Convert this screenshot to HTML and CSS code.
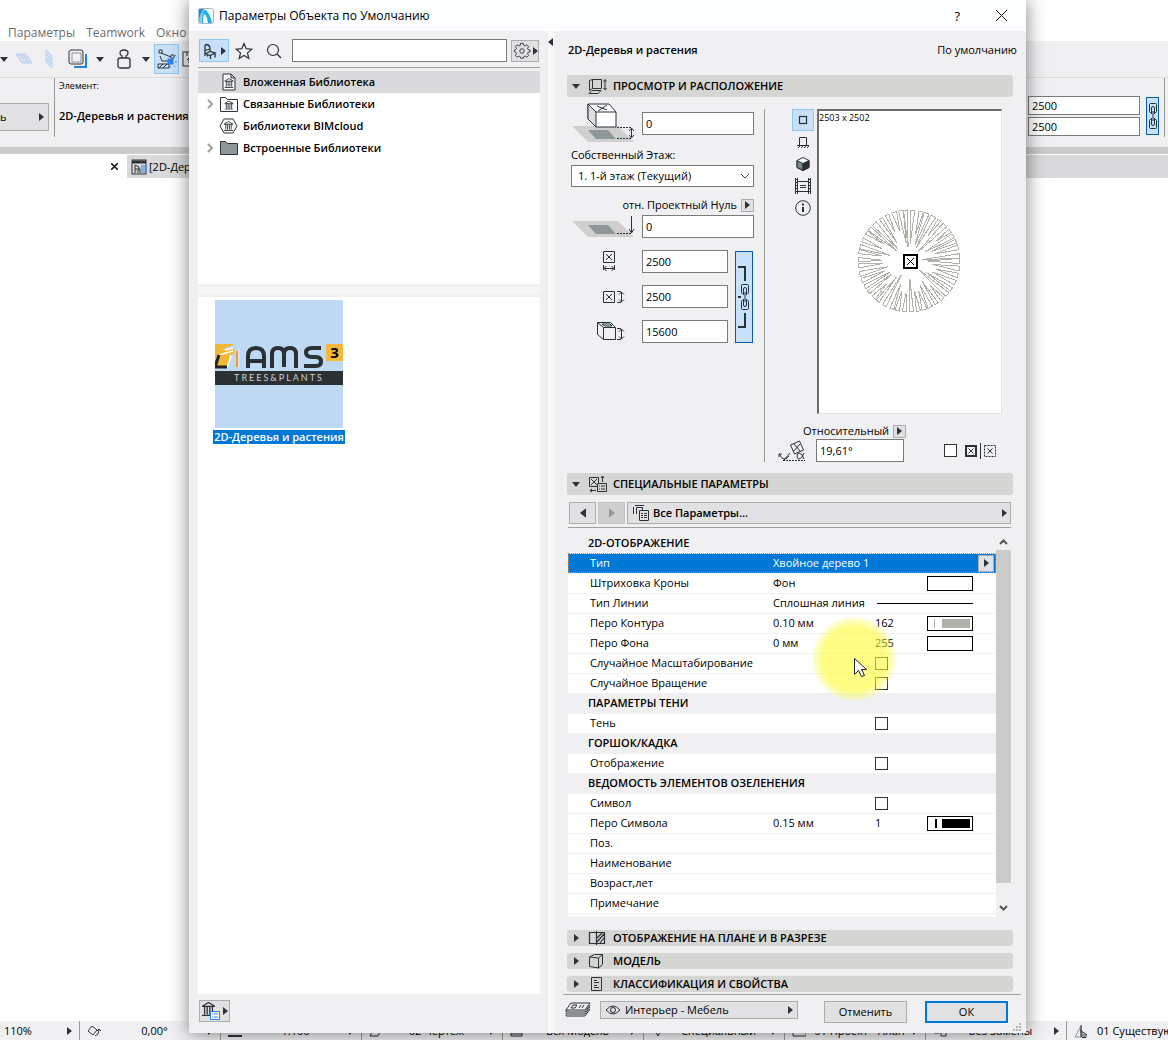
FILE: index.html
```html
<!DOCTYPE html>
<html lang="ru">
<head>
<meta charset="utf-8">
<title>Параметры Объекта по Умолчанию</title>
<link rel="stylesheet" href="styles.css">
</head>
<body>
<svg class="defs" aria-hidden="true">
  <symbol id="right" viewBox="0 0 5 8"><path d="M0 0 5 4 0 8z" fill="#2b3338"/></symbol>
  <symbol id="left" viewBox="0 0 5 8"><path d="M5 0 0 4 5 8z" fill="#2b3338"/></symbol>
  <symbol id="down" viewBox="0 0 8 5"><path d="M0 0h8L4 5z" fill="#2b3338"/></symbol>
  <symbol id="chev" viewBox="0 0 6 10"><path d="M1 1l4 4-4 4" fill="none" stroke="#a0a0a0" stroke-width="2"/></symbol>
  <symbol id="temple" viewBox="0 0 10 10"><path d="M0 3 5 0l5 3zM0 10h10M2 3v6M4 3v6M6 3v6M8 3v6" fill="none" stroke="#2b3338"/></symbol>
  <symbol id="chain" viewBox="0 0 10 28"><path d="M3.500 10.500h-1q-1 0-1-1v-7q0-1 1-1h5q1 0 1 1v7q0 1-1 1h-1M3.500 17.500h-1q-1 0-1 1v7q0 1 1 1h5q1 0 1-1v-7q0-1-1-1h-1M3.500 12V6q0-1.500 1.500-1.500T6.500 6v6M3.500 16v6q0 1.500 1.500 1.500T6.500 22v-6M5 9v10" fill="none" stroke="#263238"/></symbol>
  <symbol id="chair" viewBox="0 0 14 16"><path d="M2 13V3q0-1.500 1.500-1.500Q7 2 7 6v3M2 7.500l5-1.500M2 11l5-2.500 5 1.500-5 2.500L3 11M7.500 12.500V16M12 10v4.500M4.500 12v1.500" fill="none" stroke="#2b3338" stroke-width="1.300"/></symbol>
</svg>
<div class="app">
  <nav class="menubar">
    <a href="#">Параметры</a>
    <a href="#">Teamwork</a>
    <a href="#">Окно</a>
  </nav>
  <div class="toolbar">
    <svg width="8" height="5"><use href="#down"/></svg>
    <svg class="t-grid" width="18" height="12" fill="none" stroke="#b4cdf0"><path d="M1 1h10l6 9H7zM4 5h10M5 1l6 9M8 1l6 9M2 3h10M6 8h10"/></svg>
    <svg class="t-wall" width="8" height="20" fill="none" stroke="#b4cdf0"><path d="M1 1l6 6v12l-6-6zM3 3v12M5 5v12M1 5l6 6M1 9l6 6"/></svg>
    <svg class="t-box" width="20" height="20" fill="none"><path d="M6 18h12V5" stroke="#287ee8" stroke-width="2"/><rect x="1" y="1" width="14" height="14" rx="2" fill="#f0f0f3" stroke="#2b3338"/><rect x="4" y="4" width="9" height="9" stroke="#8c9296"/></svg>
    <svg class="t-drop" width="8" height="5"><use href="#down"/></svg>
    <svg class="t-lock" width="14" height="20" fill="none" stroke="#2b3338" stroke-width="1.300"><path d="M5 9V7Q3 6 3 4q0-3 4-3t4 3q0 2-2 3v2"/><rect x="1" y="9" width="12" height="10" rx="2"/></svg>
    <svg class="t-drop2" width="8" height="5"><use href="#down"/></svg>
    <button class="tool-active" type="button" aria-label="Привязка"><svg width="20" height="20" fill="none" stroke="#2b3338"><path d="M4 4l10 4M3 7l2 5h7M1 15h11v4H1zM2 19l4-4M6 19l4-4"/><path d="M2 1h3v3H2zM14 6h3v3h-3z" fill="#fff"/><rect x="11" y="10" width="5" height="5" fill="#2b83f6" stroke="#2b83f6"/><path d="M17 8l2-2M18 13h2M17 17l1 1M13 17v2" stroke="#2b83f6"/></svg></button>
    <svg width="14" height="16" fill="none" stroke="#2b3338"><rect x="1" y="1" width="14" height="14"/><path d="M5 1v4M9 1v3M7 12V7M5 9l2-2 2 2"/></svg>
  </div>
  <div class="infobar">
    <button class="info-pick" type="button"><span>ь</span><svg width="5" height="8"><use href="#right"/></svg></button>
    <div class="info-name"><span class="small">Элемент:</span><b>2D-Деревья и растения</b></div>
    <div class="info-size">
      <input aria-label="Ширина" value="2500"><input aria-label="Глубина" value="2500">
    </div>
    <button class="link-btn info-link" type="button" aria-label="Сохранять пропорции"><svg width="10" height="28"><use href="#chain"/></svg></button>
    <span class="info-end"></span>
  </div>
  <div class="tabs">
    <button class="tab-close" type="button" aria-label="Закрыть"><svg width="7" height="7" stroke="#222" stroke-width="1.600"><path d="M0 0l7 7M7 0 0 7"/></svg></button>
    <div class="tab"><svg width="16" height="16" fill="none" stroke="#2b3338"><rect x="1" y="1" width="14" height="14"/><path d="M1 3h14" stroke-width="3"/><path d="M4 14V6l4 2v3M4 10h5v4M7 11v3"/><path d="M10 7h4M10 9h4M10 11h4M10 13h4" stroke="#2b83f6"/></svg><span>[2D-Деревья]</span></div>
  </div>
  <main class="canvas"></main>
  <footer class="status">
    <div class="st st-first"><span>110%</span><svg width="5" height="8"><use href="#right"/></svg></div>
    <div class="st"><svg width="14" height="12" fill="none" stroke="#2b3338"><path d="M5 1l5 4-4 5-5-4zM8 11q4-1 4-6M10 6l2-2 2 2"/></svg><span>0,00°</span><svg width="5" height="8"><use href="#right"/></svg></div>
    <div class="st"><svg width="14" height="12" stroke="#2b3338"><path d="M0 11h14" stroke-width="2"/></svg><span>1:100</span><svg width="5" height="8"><use href="#right"/></svg></div>
    <div class="st"><svg width="14" height="12" fill="none" stroke="#2b3338"><path d="M5 3h8l-4 8H1z"/></svg><span>02 Чертёж</span><svg width="5" height="8"><use href="#right"/></svg></div>
    <div class="st"><svg width="14" height="12" fill="none" stroke="#2b3338"><path d="M1 3h11v8H1zM1 9h11"/></svg><span>Вся Модель</span><svg width="5" height="8"><use href="#right"/></svg></div>
    <div class="st"><svg width="14" height="12" fill="none" stroke="#2b3338"><path d="M3 3l4 8 4-8"/></svg><span>Специальный</span><svg width="5" height="8"><use href="#right"/></svg></div>
    <div class="st"><svg width="14" height="12" fill="none" stroke="#2b3338"><path d="M1 3v8h13V3"/></svg><span>01 Проект - План</span><svg width="5" height="8"><use href="#right"/></svg></div>
    <div class="st"><svg width="14" height="12" fill="none" stroke="#2b3338"><path d="M1 8h5M8 5h5v6H8z"/></svg><span>Без Замены</span><svg width="5" height="8"><use href="#right"/></svg></div>
    <div class="st st-last"><svg width="14" height="14" fill="none" stroke="#2b3338"><path d="M1 13 7 2v11z" stroke="#8c9296"/><path d="M6 6l7 5M8 8v5.500h4V10M10 13v-3M7 1v12"/></svg><span>01 Существую</span></div>
  </footer>
</div>

<section class="dialog" role="dialog" aria-labelledby="dlg-title">
  <header class="titlebar">
    <svg width="16" height="16"><rect x=".5" y=".5" width="15" height="15" rx="2" fill="#f4f8fa" stroke="#a9b7bf"/><path d="M1 1h5Q2 5 1 13z" fill="#1d8fd0"/><path d="M1 15Q2 3 6.500 1.500 11 3 14 15h-4Q9 8 6.500 6 5 8 5 15z" fill="#19b0ee"/><path d="M1 15Q2 4 6.500 1.500 4 6 4 15z" fill="#7fcdf0"/></svg>
    <h1 id="dlg-title">Параметры Объекта по Умолчанию</h1>
    <button type="button" class="plain help" aria-label="Справка">?</button>
    <button type="button" class="plain close" aria-label="Закрыть"><svg width="11" height="11" stroke="#111"><path d="M0 0l11 11M11 0 0 11"/></svg></button>
  </header>
  <div class="body">
    <aside class="library">
      <div class="lib-tools">
        <button type="button" class="chair-btn" aria-label="Объекты"><svg width="14" height="16"><use href="#chair"/></svg><svg width="5" height="8"><use href="#right"/></svg></button>
        <button type="button" class="plain" aria-label="Избранное"><svg width="18" height="18" fill="none" stroke="#2b3338" stroke-width="1.200"><path d="M9 1.500l2.200 5.200 5.600.5-4.300 3.700 1.300 5.600L9 13.500l-4.800 3 1.300-5.600L1.200 7.200l5.600-.5z"/></svg></button>
        <svg class="search-icon" width="16" height="16" fill="none" stroke="#2b3338" stroke-width="1.200"><circle cx="7" cy="7" r="5.500"/><path d="M11 11l4 4"/></svg>
        <input class="search" aria-label="Поиск">
        <button type="button" class="grey-btn gear-btn" aria-label="Настройки"><svg width="18" height="18" viewBox="0 0 18 20" fill="none" stroke="#2b3338"><path d="M7.500 1.500h3l.4 2.200 1.600.7 1.900-1.300 2 2-1.300 1.900.7 1.500 2.200.5v2l-2.200.5-.7 1.500 1.300 1.900-2 2-1.900-1.300-1.600.7-.4 1.700h-3l-.4-1.700-1.600-.7-1.900 1.300-2-2L2.900 13l-.7-1.500L.5 11V9l1.700-.5L2.900 7 1.600 5.100l2-2 1.900 1.300 1.600-.7z"/><circle cx="9" cy="10" r="2.500"/></svg><svg width="5" height="8"><use href="#right"/></svg></button>
      </div>
      <ul class="tree">
        <li class="selected"><i></i><svg width="20" height="18" fill="#fff" stroke="#2b3338"><path d="M4 1h8l4 4v12H4zM12 1v4h4"/><use href="#temple" x="5.500" y="5" width="9" height="10"/></svg><span>Вложенная Библиотека</span></li>
        <li><svg class="exp" width="6" height="10"><use href="#chev"/></svg><svg width="20" height="18" fill="none" stroke="#2b3338"><path d="M1.500 16.500v-14h5l2 2h10v12z"/><use href="#temple" x="5.500" y="6" width="9" height="9"/></svg><span>Связанные Библиотеки</span></li>
        <li><i></i><svg width="20" height="18" fill="none" stroke="#2b3338"><path d="M5 2h9l4 7-4 7H5L1 9z"/><use href="#temple" x="5" y="4" width="9" height="10"/></svg><span>Библиотеки BIMcloud</span></li>
        <li><svg class="exp" width="6" height="10"><use href="#chev"/></svg><svg width="20" height="18" fill="#8f979a" stroke="#2b3338"><path d="M1.500 15.500v-13h5l2 2h10v11z"/></svg><span>Встроенные Библиотеки</span></li>
      </ul>
      <div class="hsplit"></div>
      <div class="gallery">
        <figure class="item">
          <div class="thumb">
            <div class="brand">
              <svg width="26" height="26"><path d="M0 0h20L6 6l14-1-1 5-5 1 1 6-5 7H0z" fill="#f4b731"/><path d="M10 6l8-2M4 11l14-4M16 12l-4 12" stroke="#fff" stroke-width="1.500"/><path d="M24 4v20" stroke="#e3edf5" stroke-width="1"/><path d="M22 7v16" stroke="#ff9a1e" stroke-width="2"/><path d="M4 11 1 20v3h11" fill="none" stroke="#1f2427" stroke-width="3"/></svg>
              <svg class="ams" width="80" height="26" fill="none" stroke="#2b3033" stroke-width="4"><path d="M4 24V12q0-8 8-8t8 8v12M4 17h16M28 24V10q0-6 6-6t6 6v13M40 10q0-6 6-6t6 6v14M77 4h-9q-6 0-6 4.500t6 4.500h4q5 0 5 4.500T72 22H60"/></svg>
              <span class="three">3</span>
            </div>
            <div class="brand-line">TREES&amp;PLANTS</div>
          </div>
          <figcaption>2D-Деревья и растения</figcaption>
        </figure>
      </div>
      <button type="button" class="grey-btn lib-btn" aria-label="Менеджер библиотек"><svg width="18" height="18"><use href="#temple" width="13" height="14"/><rect x="8.500" y="9.500" width="9" height="8" fill="#fff" stroke="#2b83f6"/><path d="M10 12h1M12 12h4M10 15h1M12 15h4" stroke="#2b83f6"/></svg><svg width="5" height="8"><use href="#right"/></svg></button>
    </aside>
    <div class="vsplit"><svg width="5" height="8"><use href="#left"/></svg></div>
    <div class="settings">
      <div class="sel-head"><b>2D-Деревья и растения</b><span>По умолчанию</span></div>

      <button type="button" class="section"><svg class="tri" width="8" height="5"><use href="#down"/></svg><svg width="20" height="18" fill="none" stroke="#2b3338"><path d="M4.500 2.500h9v9h-9zM4.500 2.500l-3 1v10l3-2M4 13.500h9l-3 3H1zM17 3v9M15.500 4.500 17 2.500l1.500 2M15.500 11l1.500 2 1.500-2"/></svg>ПРОСМОТР И РАСПОЛОЖЕНИЕ</button>
      <div class="placement">
        <div class="dims">
          <div class="row">
            <svg width="64" height="42" fill="none" stroke="#263238"><path d="M1 24h46l16 16H17z" fill="#cfcfd0" stroke="none"/><path d="M17 28h20l8 9H25z" fill="#8d979a" stroke="none"/><path d="M17 2h21l7 8v15H25l-8-8z" fill="#fff"/><path d="M17 2l8 8v15l-8-8z" fill="#dedede"/><path d="M17 2l8 8h20M26 4l10 4M36 3l-9 6"/><path d="M46 25.500h15M46 36.500h15" stroke-dasharray="2 1"/><path d="M60.500 27v8M58 29l2.500-3 2.500 3M58 33l2.500 3 2.500-3"/></svg>
            <input class="wide" aria-label="Возвышение над этажом" value="0">
          </div>
          <label for="story">Собственный Этаж:</label>
          <div class="select"><select id="story"><option>1. 1-й этаж (Текущий)</option></select><svg width="10" height="6" fill="none" stroke="#444"><path d="M1 1l4 4 4-4"/></svg></div>
          <div class="rel"><label for="zero">отн. Проектный Нуль</label><button type="button" class="mini" aria-label="Выбрать уровень"><svg width="5" height="8"><use href="#right"/></svg></button></div>
          <div class="row">
            <svg width="64" height="24" fill="none" stroke="#263238"><path d="M1 6h46l16 16H17z" fill="#cfcfd0" stroke="none"/><path d="M17 10h20l8 9H25z" fill="#8d979a" stroke="none"/><path d="M46 18.500h15" stroke-dasharray="2 1"/><path d="M60.500 1v17M58 14l2.500 4 2.500-4" /></svg>
            <input class="wide" id="zero" value="0">
          </div>
          <div class="sizes">
            <div class="size-list">
              <div class="row"><svg width="64" height="24" fill="none" stroke="#263238"><path d="M32.500 1.500h11v11h-11zM35 4l6 6M41 4l-6 6M32.500 15v5M43.500 15v5M33 18.500h10M35.500 16 33 18.500l2.500 2.500M40.500 16l2.500 2.500-2.500 2.500"/></svg><input aria-label="Ширина" value="2500"></div>
              <div class="row"><svg width="64" height="24" fill="none" stroke="#263238"><path d="M32.500 6.500h11v11h-11zM35 9l6 6M41 9l-6 6M46 6.500h4M46 17.500h4M50.500 7v10M48 9.500 50.500 7 53 9.500M48 14.500l2.500 2.500 2.500-2.500"/></svg><input aria-label="Глубина" value="2500"></div>
              <div class="row"><svg width="64" height="24" fill="none" stroke="#263238"><path d="M26.500 2.500h13l5 5v12h-12l-6-5zM26.500 2.500l6 5v12M32.500 7.500h12M31 4h8l2 2h-7zM46 8.500h4M46 19.500h4M50.500 9v10M48 11.500 50.500 9l2.500 2.500M48 16.500l2.500 2.500 2.500-2.500"/></svg><input aria-label="Высота" value="15600"></div>
            </div>
            <button type="button" class="link-btn" aria-label="Сохранять пропорции"><svg width="14" height="66" fill="none" stroke="#263238"><path d="M1 3h7v14M8 49v14H1" stroke-width="2"/><path d="M1 33h3" stroke-width="2"/><use href="#chain" x="3" y="19" width="10" height="28"/></svg></button>
          </div>
        </div>
        <div class="view">
          <div class="view-row">
            <div class="view-modes">
              <button type="button" class="on" aria-label="План"><svg width="16" height="16" fill="none" stroke="#263238" stroke-width="1.200"><rect x="4.500" y="4.500" width="7" height="7"/></svg></button>
              <button type="button" aria-label="Фасад"><svg width="16" height="16" fill="none" stroke="#263238"><path d="M4.500 11V3.500h7V11M2 11.500h12M3 14l2-2M6 14l2-2M9 14l2-2M12 14l2-2"/></svg></button>
              <button type="button" aria-label="3D-вид"><svg width="16" height="16" stroke="#263238"><path d="M8 1.500l6 3v7l-6 3-6-3v-7z" fill="#fff"/><path d="M2 4.500l6 3v7l-6-3z" fill="#7d8486"/><path d="M8 7.500l6-3v7l-6 3z" fill="#263238"/></svg></button>
              <button type="button" aria-label="Эскиз"><svg width="16" height="16" fill="none" stroke="#263238"><path d="M.5 0v16M2.500 0v16M13.500 0v16M15.500 0v16"/><path d="M1.500 1v15M14.500 1v15" stroke-dasharray="1 2"/><path d="M3 3.500h10M3 13.500h10M5 7.500h6M5 9.500h6"/></svg></button>
              <button type="button" aria-label="Сведения"><svg width="16" height="16" fill="none" stroke="#263238"><circle cx="8" cy="8" r="7.300"/><path d="M8 7v5" stroke-width="2"/><path d="M8 3.500v2" stroke-width="2"/></svg></button>
            </div>
            <div class="preview">
              <span class="small">2503 x 2502</span>
              <svg class="plant" viewBox="-52 -52 104 104" width="104" height="104" fill="none" stroke="#b1b1a9"><g id="spokes" shape-rendering="crispEdges"></g><rect x="-5" y="-6" width="13" height="13" fill="#fff" stroke="#000" stroke-width="2"/><path d="M-2-3l7 7M5-3l-7 7" stroke="#000"/></svg>
            </div>
          </div>
          <div class="angle-label"><label for="angle">Относительный</label><button type="button" class="mini" aria-label="Тип угла"><svg width="5" height="8"><use href="#right"/></svg></button></div>
          <div class="angle-row">
            <svg width="28" height="22" fill="none" stroke="#263238"><path d="M12.500 5l9-4 4 9-9 4zM16 4l6 7M22 4l-6 7M12 13l-6 7M1 14l4 5q3 1 6-3M1 17v-3h3"/><path d="M5 20.500h22" stroke-dasharray="2 1"/><path d="M26 13q-2 6-5 6-2 0-2-3t2-3q3 0 5 6"/></svg>
            <input id="angle" value="19,61°">
            <input type="checkbox" class="mirror" aria-label="Зеркально">
            <svg class="anchors" width="32" height="16" fill="none" stroke="#263238"><rect x="2" y="3" width="10" height="10" stroke-width="2"/><path d="M4.500 5.500l5 5M9.500 5.500l-5 5M16.500 0v16M23.500 5.500l5 5M28.500 5.500l-5 5"/><rect x="20.500" y="2.500" width="11" height="11" stroke-dasharray="2 1"/></svg>
          </div>
        </div>
      </div>

      <button type="button" class="section"><svg class="tri" width="8" height="5"><use href="#down"/></svg><svg width="20" height="18" fill="none" stroke="#2b3338"><path d="M1.500 2.500h9v9h-9zM3 4l6 6M9 4l-6 6M14.500 1v6M13 3l1.500-2L16 3M2 15.500h6M4 14l-2 1.500L4 17"/><path d="M9.500 8.500h9v8h-9z" fill="#d5d5d3"/><path d="M11 11h1M13 11h4M11 14h1M13 14h4"/></svg>СПЕЦИАЛЬНЫЕ ПАРАМЕТРЫ</button>
      <div class="pager">
        <button type="button" class="grey-btn" aria-label="Назад"><svg width="6" height="10"><use href="#left"/></svg></button>
        <button type="button" class="grey-btn" disabled aria-label="Вперёд"><svg width="6" height="10"><use href="#right"/></svg></button>
        <button type="button" class="grey-btn all"><svg width="18" height="16" fill="none" stroke="#2b3338"><path d="M1.500 2v7M4.500 9V2.500h6V5M3 .5h9M7.500 5.500h9v10h-9zM9 8.500h2M12 8.500h3M9 10.500h2M12 10.500h3M9 12.500h2M12 12.500h3"/></svg><b>Все Параметры...</b><svg width="5" height="8"><use href="#right"/></svg></button>
      </div>
      <div class="params">
        <table>
          <colgroup><col class="c1"><col class="c2"><col class="c3"><col></colgroup>
          <tr class="group"><th colspan="4">2D-ОТОБРАЖЕНИЕ</th></tr>
          <tr class="current"><td>Тип</td><td colspan="2">Хвойное дерево 1</td><td><button type="button" class="mini" aria-label="Выбрать тип"><svg width="5" height="8"><use href="#right"/></svg></button></td></tr>
          <tr><td>Штриховка Кроны</td><td>Фон</td><td></td><td><span class="swatch"></span></td></tr>
          <tr><td>Тип Линии</td><td>Сплошная линия</td><td colspan="2"><span class="line"></span></td></tr>
          <tr><td>Перо Контура</td><td>0.10 мм</td><td>162</td><td><span class="swatch pen grey"></span></td></tr>
          <tr><td>Перо Фона</td><td>0 мм</td><td>255</td><td><span class="swatch"></span></td></tr>
          <tr><td colspan="2"><label for="p1">Случайное Масштабирование</label></td><td><input type="checkbox" id="p1"></td><td></td></tr>
          <tr><td colspan="2"><label for="p2">Случайное Вращение</label></td><td><input type="checkbox" id="p2"></td><td></td></tr>
          <tr class="group"><th colspan="4">ПАРАМЕТРЫ ТЕНИ</th></tr>
          <tr><td colspan="2"><label for="p3">Тень</label></td><td><input type="checkbox" id="p3"></td><td></td></tr>
          <tr class="group"><th colspan="4">ГОРШОК/КАДКА</th></tr>
          <tr><td colspan="2"><label for="p4">Отображение</label></td><td><input type="checkbox" id="p4"></td><td></td></tr>
          <tr class="group"><th colspan="4">ВЕДОМОСТЬ ЭЛЕМЕНТОВ ОЗЕЛЕНЕНИЯ</th></tr>
          <tr><td colspan="2"><label for="p5">Символ</label></td><td><input type="checkbox" id="p5"></td><td></td></tr>
          <tr><td>Перо Символа</td><td>0.15 мм</td><td>1</td><td><span class="swatch pen"></span></td></tr>
          <tr><td colspan="4">Поз.</td></tr>
          <tr><td colspan="4">Наименование</td></tr>
          <tr><td colspan="4">Возраст,лет</td></tr>
          <tr><td colspan="4">Примечание</td></tr>
        </table>
        <div class="scroll"><svg width="9" height="6" fill="none" stroke="#555" stroke-width="2"><path d="M1 5l3.500-3.500L8 5"/></svg><div class="thumb-bar"></div><svg width="9" height="6" fill="none" stroke="#555" stroke-width="2"><path d="M1 1l3.500 3.500L8 1"/></svg></div>
        <svg class="halo" width="84" height="84"><defs><radialGradient id="glow"><stop offset=".76" stop-color="#fdfb30" stop-opacity=".6"/><stop offset="1" stop-color="#fdfb30" stop-opacity=".12"/></radialGradient></defs><circle cx="42" cy="42" r="42" fill="url(#glow)"/><path d="M42.500 41.500v16l4-4 3 6 3-1-3-6h5z" fill="#fff" stroke="#222"/></svg>
      </div>
      <div class="closed">
        <button type="button" class="section thin"><svg class="tri" width="5" height="8"><use href="#right"/></svg><svg width="20" height="16" fill="none" stroke="#2b3338"><path d="M8 2.500H1.500v11H8M8.500 1v14M8.500 2.500h8v11h-8M9 8l5-5M9 12l7-8M12 13l4-5" stroke-width="1.200"/></svg>ОТОБРАЖЕНИЕ НА ПЛАНЕ И В РАЗРЕЗЕ</button>
        <button type="button" class="section thin"><svg class="tri" width="5" height="8"><use href="#right"/></svg><svg width="20" height="16" fill="none" stroke="#2b3338"><path d="M1.500 4l5-2.500h8l-4 3.500v10l-9-1.500zM1.500 4l9 1M14.500 1.500v10l-4 3.500"/></svg>МОДЕЛЬ</button>
        <button type="button" class="section thin"><svg class="tri" width="5" height="8"><use href="#right"/></svg><svg width="20" height="16" fill="none" stroke="#2b3338"><path d="M3.500 1.500h10v13h-10zM6 4.500h3M6 6.500h5M6 9.500h3M6 11.500h5"/></svg>КЛАССИФИКАЦИЯ И СВОЙСТВА</button>
      </div>
      <footer class="actions">
        <svg width="26" height="16" fill="none" stroke="#2b3338"><path d="M6 1h19l-5 7H1zM1 8v2h19l5-7M1 11v1h19l5-7M1 13v1h19l5-7M8 3h4l-2 3H6zM14 6l2-3M17 6l2-3"/></svg>
        <button type="button" class="grey-btn layer"><svg width="16" height="12" fill="none" stroke="#2b3338"><path d="M1 6q7-8 14 0-7 8-14 0z"/><circle cx="8" cy="6" r="2.500"/></svg><span>Интерьер - Мебель</span><svg width="5" height="8"><use href="#right"/></svg></button>
        <button type="button" class="push">Отменить</button>
        <button type="button" class="push ok">ОК</button>
        <svg class="grip" width="8" height="8" fill="#b4b4b4"><path d="M6 0h2v2H6zM3 3h2v2H3zM6 3h2v2H6zM0 6h2v2H0zM3 6h2v2H3zM6 6h2v2H6z"/></svg>
      </footer>
    </div>
  </div>
</section>
<script src="script.js"></script>
</body>
</html>
```
FILE: script.js
```js
// Draws the conifer crown: narrow open wedges around the insertion point.
const crown = document.getElementById('spokes');
const NS = 'http://www.w3.org/2000/svg';
const COUNT = 46;
let seed = 7;
const rnd = () => (seed = (seed * 16807) % 2147483647) / 2147483647;
const at = (deg, r) => {
  const a = deg * Math.PI / 180;
  return (r * Math.cos(a)).toFixed(1) + ' ' + (r * Math.sin(a)).toFixed(1);
};
for (let i = 0; i < COUNT; i++) {
  const deg = i * 360 / COUNT + rnd() * 3;
  const half = 2 + rnd();
  const tip = 12 + rnd() * 22;
  const p = document.createElementNS(NS, 'path');
  p.setAttribute('d', `M${at(deg, tip)}L${at(deg - half, 51)}L${at(deg + half, 51)}L${at(deg, tip)}`);
  crown.appendChild(p);
}
```
FILE: styles.css
```css
* { box-sizing: border-box; }
body {
  margin: 0;
  background: #fff;
  color: #000;
  font: 11px/16px "Open Sans", "Noto Sans", sans-serif;
}
button, input, select { font: inherit; color: inherit; margin: 0; padding: 0; border-radius: 0; }
button { display: flex; align-items: center; border: 0; background: none; }
input { min-width: 0; border: 1px solid #7a7a7a; background: #fff; padding: 0 3px; }
svg { display: block; flex: none; }
b { font-weight: 600; }
.defs { position: absolute; width: 0; height: 0; }
.small { font-size: 9px; }

/* main window */
.app { display: flex; flex-direction: column; min-height: 100vh; }
.menubar { display: flex; gap: 11px; height: 41px; padding: 25px 8px 0; font-size: 12px; }
.menubar a { color: #6d6d6d; text-decoration: none; }
.toolbar { display: flex; align-items: center; height: 37px; background: #f0f0f3; border-bottom: 1px solid #dcdcdc; }
.t-grid { margin-left: 7px; }
.t-wall { margin-left: 12px; }
.t-box { margin-left: 15px; }
.t-drop { margin-left: 8px; }
.t-lock { margin-left: 13px; }
.t-drop2 { margin: 0 4px 0 11px; }
.tool-active { width: 25px; height: 30px; margin-right: 3px; justify-content: center; background: #c9e1f8; border: 1px solid #90c8f0; }
.infobar { display: flex; height: 69px; padding-right: 3px; background: #f0f0f3; }
.info-pick { align-self: center; justify-content: space-between; width: 49px; height: 28px; padding-right: 4px; margin-top: 8px; background: #e1e1e3; border: 1px solid #adadad; border-left: 0; }
.info-name { display: flex; flex-direction: column; gap: 14px; margin: 0 auto 10px 5px; padding-left: 4px; border-left: 1px solid #999; }
.info-size { display: flex; flex-direction: column; gap: 2px; width: 112px; padding-top: 18px; }
.info-size input { height: 19px; }
.link-btn { justify-content: center; background: #c9e1f8; border: 1px solid #0a5ba5; }
.info-link { width: 13px; height: 38px; margin: 19px 5px 0 6px; }
.info-end { width: 1px; height: 59px; background: #999; }
.tabs { display: flex; height: 31px; border-top: 7px solid #cbcbc9; }
.tab-close { width: 127px; justify-content: flex-end; padding-right: 9px; }
.tab { display: flex; flex: 1; align-items: center; gap: 2px; margin-top: 1px; padding-left: 4px; background: #dadadc; }
.canvas { flex: 1; }
.status { display: flex; height: 19px; overflow: hidden; background: #f0f0f3; }
.st { display: flex; flex: none; align-items: center; justify-content: space-between; width: 141px; padding: 0 7px; border-left: 1px solid #999; white-space: nowrap; }
.st-first { width: 79px; padding: 0 7px 0 4px; border: 0; }
.st-last { flex: 1; justify-content: flex-start; gap: 9px; padding-right: 0; }

/* dialog window */
.dialog { position: absolute; inset: 0 142px 7px 189px; display: flex; flex-direction: column; background: #f0f0f3; box-shadow: 0 0 18px rgba(0, 0, 0, .5); }
.titlebar { display: flex; align-items: center; height: 31px; padding: 0 19px 0 9px; background: #fbfdfe; }
h1 { flex: 1; margin: 0 0 0 5px; font-size: 12px; font-weight: 400; }
.help { font-size: 13px; margin-right: 36px; }
.body { display: flex; flex: 1; min-height: 0; }
.library { display: flex; flex: 1 1 351px; flex-direction: column; min-width: 0; padding: 7px 0 11px 9px; }
.lib-tools { display: flex; align-items: center; height: 30px; padding: 0 1px 4px; border-bottom: 1px solid #a0a0a0; }
.chair-btn { width: 30px; height: 23px; justify-content: center; gap: 4px; margin-right: 6px; background: #c9e1f8; border: 1px solid #90c8f0; }
.search-icon { margin: 0 10px 0 13px; }
.search { flex: 1; height: 23px; margin-right: 4px; }
.grey-btn { justify-content: center; background: #e1e1e3; border: 1px solid #adadad; }
.gear-btn { width: 28px; height: 22px; gap: 2px; }
.tree { height: 213px; margin: 3px 0 0; padding: 0; background: #fff; list-style: none; font-weight: 600; }
.tree li { display: flex; align-items: center; height: 22px; padding-left: 9px; }
.tree i { width: 6px; }
.tree li > :nth-child(2) { margin: 0 4px 0 6px; }
.tree .selected { background: #dadadc; }
.hsplit { height: 7px; margin: 3px 0; background: #f5f5f5; }
.gallery { flex: 1; padding: 3px 16px; background: #fff; }
.item { display: flex; flex-direction: column; width: 130px; margin: 0; align-items: center; }
.thumb { width: 128px; height: 128px; padding-top: 44px; background: #bdd9f4; }
.brand { display: flex; height: 26px; }
.ams { margin: 0 2px 0 3px; }
.three { width: 17px; height: 17px; background: #f4b93c; font-size: 15px; font-weight: 700; line-height: 16px; text-align: center; }
.brand-line { height: 14px; margin-top: 1px; background: #2b3033; color: #d2d2d2; font: 9px/14px Lato, sans-serif; letter-spacing: 2px; text-align: center; }
.item figcaption { margin-top: 2px; height: 14px; line-height: 14px; padding: 0 1px; background: #0078d7; color: #fff; font-weight: 600; white-space: nowrap; }
.lib-btn { width: 31px; height: 22px; margin: 6px 0 0 1px; gap: 3px; }
.vsplit { width: 14px; padding: 7px 0 0 8px; background: linear-gradient(to right, #f0f0f3 8px, #f8f8f8 8px); }

.settings { display: flex; flex: 1 1 472px; flex-direction: column; min-width: 0; padding: 11px 13px 10px; }
.sel-head { display: flex; align-items: center; justify-content: space-between; height: 16px; margin: 0 -4px 17px 1px; }
.section { width: 100%; height: 22px; flex: none; padding-left: 5px; background: #d5d5d3; border-radius: 3px; font-weight: 600; white-space: nowrap; }
.section svg + svg { margin: 0 5px 0 8px; }
.section svg[width="5"] { margin: 0 2px; }
.section svg[width="5"] + svg { margin: 0 5px 0 7px; }
.thin { height: 16px; }
.placement { display: flex; margin-bottom: 11px; padding-top: 6px; }
.dims { display: flex; flex-direction: column; width: 198px; margin-top: 6px; padding: 0 10px 0 4px; border-right: 1px solid #999; }
.row { display: flex; align-items: center; height: 23px; gap: 7px; }
.row input { width: 86px; height: 23px; }
.row .wide { flex: 1; }
.dims > .row:first-child { height: 28px; }
.dims > label { margin-top: 10px; }
.select { position: relative; height: 22px; margin: 2px 0 10px; }
.select select { width: 100%; height: 22px; padding-left: 6px; appearance: none; background: #fff; border: 1px solid #7a7a7a; }
.select svg { position: absolute; right: 4px; top: 8px; }
.rel, .angle-label { display: flex; align-items: center; gap: 4px; height: 16px; }
.rel { justify-content: flex-end; margin-bottom: 2px; }
.mini { width: 13px; height: 13px; justify-content: center; background: #e1e1e3; border: 1px solid #adadad; }
.sizes { display: flex; justify-content: space-between; margin: 12px 1px 0 0; }
.size-list { display: flex; flex-direction: column; gap: 12px; }
.sizes .link-btn { width: 18px; height: 92px; margin-top: 1px; }
.view { display: flex; flex: 1; flex-direction: column; min-width: 0; margin-top: 6px; }
.view-row { display: flex; gap: 3px; height: 305px; padding: 0 11px 0 27px; }
.view-modes { display: flex; flex-direction: column; }
.view-modes button { width: 22px; height: 22px; justify-content: center; }
.view-modes .on { background: #c9e1f8; border: 1px solid #90c8f0; }
.preview { position: relative; flex: 1; background: #fff; border: 1px solid #e3e3e3; border-top: 2px solid #6b6b6b; border-left: 2px solid #6b6b6b; }
.preview .small { display: block; line-height: 13px; }
.plant { position: absolute; left: 38px; top: 98px; }
.angle-label { margin: 9px 0 0 38px; }
.angle-row { display: flex; align-items: center; height: 23px; padding-left: 13px; }
.angle-row #angle { width: 88px; height: 23px; margin-left: 10px; }
.anchors { margin-left: 7px; }
input[type="checkbox"] { display: block; width: 13px; height: 13px; padding: 0; appearance: none; border: 1px solid #333; background: #fff; }
.angle-row .mirror { margin-left: 40px; }
.pager { display: flex; gap: 2px; margin: 7px 2px 0; padding-bottom: 3px; }
.pager .grey-btn { width: 27px; height: 22px; }
.pager .grey-btn:disabled { background: #cfcfcf; border-color: #c4c4c4; }
.pager .grey-btn:disabled svg { opacity: .35; }
.pager .all { flex: 1; padding: 0 3px 0 4px; }
.all b { flex: 1; margin-left: 3px; text-align: left; }
.params { position: relative; display: flex; flex: 1; min-height: 0; overflow: hidden; margin: 0 2px 13px 1px; padding-top: 5px; border-top: 1px solid #a0a0a0; background: linear-gradient(to right, #fff, #fff) left bottom / calc(100% - 15px) 5px no-repeat; }
.params table { flex: 1; align-self: flex-start; table-layout: fixed; border-collapse: collapse; background: #fff; }
.c1 { width: 205px; }
.c2 { width: 102px; }
.c3 { width: 52px; }
.params tr { height: 20px; border-bottom: 1px solid #f0f0f3; }
.params td, .params th { padding: 0; text-align: left; white-space: nowrap; line-height: 18px; }
.params td:first-child { padding-left: 22px; }
.params .group { background: #f0f0f3; }
.params th { padding-left: 20px; font-weight: 600; }
.current { background: #0078d7; color: #fff; outline: 1px dotted #e48a2c; outline-offset: -1px; }
.current .mini { width: 16px; height: 17px; margin-left: auto; margin-right: 2px; }
.swatch { display: block; width: 46px; height: 15px; border: 1px solid #000; background: #fff; }
.pen { background: linear-gradient(#000, #000) 7px 2px / 2px 9px no-repeat, linear-gradient(#000, #000) 14px 2px / 28px 9px no-repeat, #fff; }
.grey { background: linear-gradient(#b1b1a9, #b1b1a9) 6px 2px / 1px 9px no-repeat, linear-gradient(#b1b1a9, #b1b1a9) 14px 2px / 28px 9px no-repeat, #fff; }
.line { display: block; width: 96px; height: 1px; margin-left: 2px; background: #000; }
.scroll { display: flex; width: 15px; flex-direction: column; align-items: center; gap: 5px; padding: 6px 0; }
.thumb-bar { width: 15px; flex: 1; margin-bottom: 17px; background: #cbcbcb; }
.halo { position: absolute; left: 244px; top: 89px; }
.closed { display: flex; flex-direction: column; gap: 7px; padding-bottom: 2px; }
.actions { display: flex; position: relative; align-items: center; margin: 0 -8px 0 -4px; padding: 6px 13px 0 2px; border-top: 1px solid #a0a0a0; }
.actions > svg:first-child { margin-bottom: 4px; }
.layer { width: 198px; height: 18px; margin: 0 auto 4px 9px; padding: 0 4px; gap: 4px; }
.layer span { flex: 1; text-align: left; }
.push { width: 83px; height: 22px; justify-content: center; margin-left: 18px; background: #e1e1e1; border: 1px solid #adadad; }
.ok { border: 2px solid #0078d7; }
.actions .grip { position: absolute; right: 0; bottom: -8px; }
```
